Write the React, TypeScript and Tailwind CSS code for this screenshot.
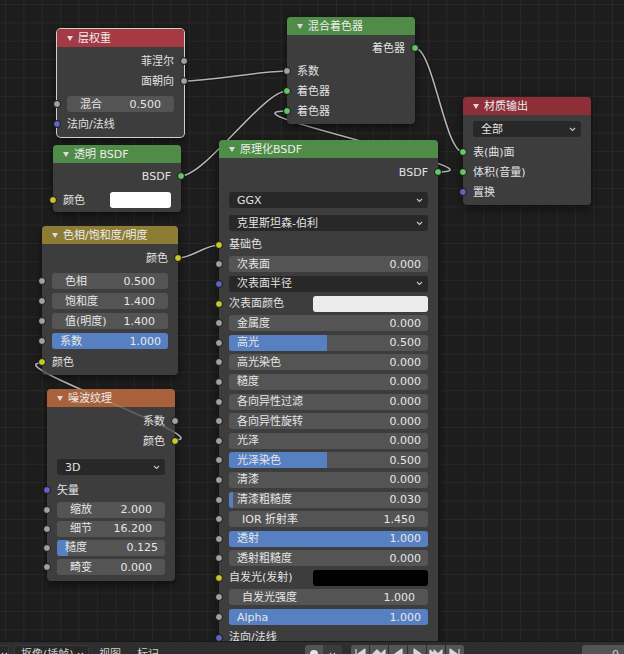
import React from 'react';

type Sock = 'grey' | 'green' | 'yellow' | 'blue';

const sockColor: Record<Sock, string> = {
  grey: 'bg-[#a1a1a1]',
  green: 'bg-[#63c763]',
  yellow: 'bg-[#c7c729]',
  blue: 'bg-[#6363c7]',
};

function Socket({ color, side }: { color: Sock; side: 'left' | 'right' }) {
  const pos = side === 'left' ? 'left-[-4px]' : 'right-[-4px]';
  return (
    <span
      className={`absolute ${pos} top-1/2 -translate-y-1/2 w-[8px] h-[8px] rounded-full border border-[#151515] ${sockColor[color]}`}
    />
  );
}

function Chevron() {
  return (
    <svg width="7" height="5" viewBox="0 0 7 5" className="shrink-0">
      <path d="M1 1 L3.5 3.5 L6 1" fill="none" stroke="#c8c8c8" strokeWidth="1.1" />
    </svg>
  );
}

function Node({
  pos,
  header,
  title,
  selected,
  children,
  body = '',
}: {
  pos: string;
  header: string;
  title: string;
  selected?: boolean;
  children: React.ReactNode;
  body?: string;
}) {
  return (
    <div
      className={`absolute ${pos} rounded-[4px] bg-[#3d3d3d] text-[11px] leading-none text-[#e2e2e2] shadow-[0_3px_8px_rgba(0,0,0,0.55)] ${
        selected ? 'ring-1 ring-[#cfcfcf]' : ''
      }`}
    >
      <div className={`h-[18px] rounded-t-[4px] flex items-center pl-[10px] text-[#ececec] ${header}`}>
        <svg width="6" height="5" viewBox="0 0 6 5" className="mr-[5px]">
          <path d="M0 0 H6 L3 5 Z" fill="#dcdcdc" />
        </svg>
        {title}
      </div>
      <div className={body}>{children}</div>
    </div>
  );
}

function OutRow({ label, sock, cls = 'h-[20px]' }: { label: string; sock: Sock; cls?: string }) {
  return (
    <div className={`relative ${cls} flex items-center justify-end pr-[10px]`}>
      {label}
      <Socket color={sock} side="right" />
    </div>
  );
}

function InRow({ label, sock, cls = 'h-[20px]' }: { label: string; sock: Sock; cls?: string }) {
  return (
    <div className={`relative ${cls} flex items-center pl-[10px]`}>
      {label}
      <Socket color={sock} side="left" />
    </div>
  );
}

function Field({
  label,
  value,
  fill,
  slider,
  sock = 'grey',
  cls = 'h-[20px]',
}: {
  label: string;
  value: string;
  fill?: number;
  slider?: boolean;
  sock?: Sock;
  cls?: string;
}) {
  const f = fill ?? 0;
  return (
    <div className={`relative ${cls} flex items-center px-[10px]`}>
      <Socket color={sock} side="left" />
      <div
        className={`relative h-[16px] flex-1 rounded-[3px] bg-[#545454] overflow-hidden flex items-center justify-between ${
          slider ? 'pl-[8px] pr-[7px]' : 'px-[13px]'
        }`}
      >
        {slider && f > 0 && (
          <div className="absolute inset-y-0 left-0 bg-[#5680c2]" style={{ width: `${f * 100}%` }} />
        )}
        <span className="relative text-[#e6e6e6]">{label}</span>
        <span className="relative text-[#e6e6e6]">{value}</span>
      </div>
    </div>
  );
}

function Dropdown({ label, cls = '' }: { label: string; cls?: string }) {
  return (
    <div className={`mx-[10px] h-[16px] rounded-[3px] bg-[#282828] flex items-center justify-between pl-[8px] pr-[5px] ${cls}`}>
      <span>{label}</span>
      <Chevron />
    </div>
  );
}

function ColorRow({
  label,
  sock,
  swatch,
  sw,
  cls = 'h-[20px]',
}: {
  label: string;
  sock: Sock;
  swatch: string;
  sw: string;
  cls?: string;
}) {
  return (
    <div className={`relative ${cls} flex items-center pl-[10px] pr-[10px]`}>
      <Socket color={sock} side="left" />
      <span className="flex-1">{label}</span>
      <div className={`h-[16px] rounded-[3px] ${sw} ${swatch}`} />
    </div>
  );
}

function Wires({ only }: { only?: boolean }) {
  const links = [
    'M184 81 C209 81 262 71 287 71',
    'M415 48 C433 48 445 152 463 152',
    'M181 176 C205 176 263 91 287 91',
    'M438 172 C513 172 212 111 287 111',
    'M178 258 C192 258 205 245 219 245',
  ];
  const noise = 'M175 440 C220 440 -3 363 41.7 363';
  if (only) {
    return (
      <svg className="absolute inset-0 pointer-events-none opacity-30" width="624" height="641">
        <path d={noise} fill="none" stroke="#b4b4b4" strokeWidth="1.6" />
      </svg>
    );
  }
  return (
    <svg className="absolute inset-0" width="624" height="641">
      {[...links, noise].map((d, i) => (
        <g key={i}>
          <path d={d} fill="none" stroke="#111" strokeOpacity="0.7" strokeWidth="3.4" />
          <path d={d} fill="none" stroke="#b4b4b4" strokeWidth="1.6" />
        </g>
      ))}
    </svg>
  );
}

function PlayIcon({ kind }: { kind: number }) {
  const p = [
    'M4 3 V13 M13 3 L6 8 L13 13 Z',
    'M2 8 L6 4 L10 8 L14 4 L14 12 L10 8 L6 12 Z',
    'M12 3 L5 8 L12 13 Z',
    'M5 3 L12 8 L5 13 Z',
    'M2 4 L6 8 L2 12 Z M6 4 L10 8 L14 4 L14 12 L10 8 L6 12 Z',
    'M3 3 L10 8 L3 13 Z M12 3 V13',
  ][kind];
  return (
    <svg width="16" height="16" viewBox="0 0 16 16">
      <path d={p} fill="#d8d8d8" stroke="#d8d8d8" strokeWidth="1.2" strokeLinejoin="round" />
    </svg>
  );
}

export default function App() {
  return (
    <div className="w-[624px] h-[654px] overflow-hidden flex flex-col bg-[#1d1d1d] font-['DejaVu_Sans','Noto_Sans_CJK_SC',sans-serif]">
      {/* node canvas */}
      <div className="relative h-[641px] shrink-0 overflow-hidden bg-[#1d1d1d] bg-[linear-gradient(to_right,#282828_1px,transparent_1px),linear-gradient(to_bottom,#282828_1px,transparent_1px)] bg-[length:18.4px_18.4px] bg-[position:5px_4px]">
        <Wires />

        <Node pos="left-[57px] top-[29px] w-[127px]" header="bg-[#a53a45]" title="层权重" selected body="pt-[4px] pb-[3px]">
          <OutRow label="菲涅尔" sock="grey" />
          <OutRow label="面朝向" sock="grey" />
          <Field label="混合" value="0.500" cls="h-[20px] mt-[3px]" />
          <InRow label="法向/法线" sock="blue" />
        </Node>

        <Node pos="left-[287px] top-[17px] w-[128px]" header="bg-[#4f8c47]" title="混合着色器" body="pt-[3px] pb-[3px]">
          <OutRow label="着色器" sock="green" />
          <InRow label="系数" sock="grey" cls="h-[20px] mt-[3px]" />
          <InRow label="着色器" sock="green" />
          <InRow label="着色器" sock="green" />
        </Node>

        <Node pos="left-[463px] top-[97px] w-[128px]" header="bg-[#8e2f38]" title="材质输出" body="pt-[6px] pb-[3px]">
          <Dropdown label="全部" />
          <InRow label="表(曲)面" sock="green" cls="h-[20px] mt-[5px]" />
          <InRow label="体积(音量)" sock="green" />
          <InRow label="置换" sock="blue" />
        </Node>

        <Node pos="left-[53px] top-[145px] w-[128px]" header="bg-[#4f8c47]" title="透明 BSDF" body="pt-[3px] pb-[2px]">
          <OutRow label="BSDF" sock="green" />
          <ColorRow label="颜色" sock="yellow" swatch="bg-white" sw="w-[61px]" cls="h-[20px] mt-[4px]" />
        </Node>

        <Node pos="left-[42px] top-[226px] w-[136px]" header="bg-[#8d7c33]" title="色相/饱和度/明度" body="pt-[4px] pb-[3px]">
          <OutRow label="颜色" sock="yellow" />
          <Field label="色相" value="0.500" cls="h-[20px] mt-[3px]" />
          <Field label="饱和度" value="1.400" />
          <Field label="值(明度)" value="1.400" />
          <Field label="系数" value="1.000" slider fill={1} />
          <InRow label="颜色" sock="yellow" cls="h-[20px] mt-[1px]" />
        </Node>

        <Node pos="left-[47px] top-[389px] w-[128px]" header="bg-[#a8613a]" title="噪波纹理" body="pt-[4px] pb-[4px]">
          <OutRow label="系数" sock="grey" />
          <OutRow label="颜色" sock="yellow" />
          <Dropdown label="3D" cls="mt-[8px]" />
          <InRow label="矢量" sock="blue" cls="h-[20px] mt-[5px]" />
          <Field label="缩放" value="2.000" cls="h-[19.2px]" />
          <Field label="细节" value="16.200" cls="h-[19.2px]" />
          <Field label="糙度" value="0.125" slider fill={0.1} cls="h-[19.2px]" />
          <Field label="畸变" value="0.000" cls="h-[19.2px]" />
        </Node>

        <Node pos="left-[219px] top-[140px] w-[219px]" header="bg-[#4f8c47]" title="原理化BSDF" body="pt-[4px] pb-[6px]">
          <OutRow label="BSDF" sock="green" />
          <Dropdown label="GGX" cls="mt-[10px]" />
          <Dropdown label="克里斯坦森-伯利" cls="mt-[7px]" />
          <InRow label="基础色" sock="yellow" cls="h-[19.6px] mt-[4px]" />
          <Field label="次表面" value="0.000" slider cls="h-[19.6px]" />
          <div className="relative h-[19.6px] flex items-center">
            <Socket color="blue" side="left" />
            <Dropdown label="次表面半径" cls="flex-1" />
          </div>
          <ColorRow label="次表面颜色" sock="yellow" swatch="bg-[#ececec]" sw="w-[115px]" cls="h-[19.6px]" />
          <Field label="金属度" value="0.000" slider cls="h-[19.6px]" />
          <Field label="高光" value="0.500" slider fill={0.49} cls="h-[19.6px]" />
          <Field label="高光染色" value="0.000" slider cls="h-[19.6px]" />
          <Field label="糙度" value="0.000" slider cls="h-[19.6px]" />
          <Field label="各向异性过滤" value="0.000" slider cls="h-[19.6px]" />
          <Field label="各向异性旋转" value="0.000" slider cls="h-[19.6px]" />
          <Field label="光泽" value="0.000" slider cls="h-[19.6px]" />
          <Field label="光泽染色" value="0.500" slider fill={0.49} cls="h-[19.6px]" />
          <Field label="清漆" value="0.000" slider cls="h-[19.6px]" />
          <Field label="清漆粗糙度" value="0.030" slider fill={0.02} cls="h-[19.6px]" />
          <Field label="IOR 折射率" value="1.450" cls="h-[19.6px]" />
          <Field label="透射" value="1.000" slider fill={1} cls="h-[19.6px]" />
          <Field label="透射粗糙度" value="0.000" slider cls="h-[19.6px]" />
          <ColorRow label="自发光(发射)" sock="yellow" swatch="bg-black" sw="w-[115px]" cls="h-[19.6px]" />
          <Field label="自发光强度" value="1.000" cls="h-[19.6px]" />
          <Field label="Alpha" value="1.000" slider fill={1} cls="h-[19.6px]" />
          <InRow label="法向/法线" sock="blue" cls="h-[19.6px] mt-[1px]" />
        </Node>

        <Wires only />
      </div>

      {/* timeline header */}
      <div className="h-[26px] shrink-0 bg-[#2e2e2e] border-t border-[#191919] flex items-start pt-[3px] text-[11px] leading-none text-[#d0d0d0]">
        <div className="w-[9px] h-[18px] rounded-r-[3px] bg-[#282828] border border-l-0 border-[#3a3a3a] flex items-center justify-center">
          <Chevron />
        </div>
        <div className="ml-[5px] w-[75px] h-[18px] rounded-[3px] bg-[#282828] border border-[#3a3a3a] flex items-center justify-between pl-[6px] pr-[4px]">
          <span>抠像(插帧)</span>
          <Chevron />
        </div>
        <span className="ml-[10px] h-[18px] flex items-center">视图</span>
        <span className="ml-[16px] h-[18px] flex items-center">标记</span>

        <div className="ml-[146px] flex">
          <div className="w-[18px] h-[18px] rounded-l-[3px] bg-[#545454] flex items-center justify-center">
            <span className="w-[8px] h-[8px] rounded-full bg-[#e6e6e6]" />
          </div>
          <div className="w-[19px] h-[18px] rounded-r-[3px] bg-[#3c3c3c] flex items-center justify-center">
            <Chevron />
          </div>
        </div>

        <div className="ml-[9px] flex gap-[1px]">
          {[0, 1, 2, 3, 4, 5].map((k) => (
            <div
              key={k}
              className={`w-[18px] h-[18px] bg-[#545454] flex items-center justify-center ${
                k === 0 ? 'rounded-l-[3px]' : k === 5 ? 'rounded-r-[3px]' : ''
              }`}
            >
              <PlayIcon kind={k} />
            </div>
          ))}
        </div>

        <div className="ml-auto w-[42px] h-[18px] rounded-l-[3px] bg-[#545454] flex items-center justify-end pr-[5px]">
          0
        </div>
      </div>
    </div>
  );
}
